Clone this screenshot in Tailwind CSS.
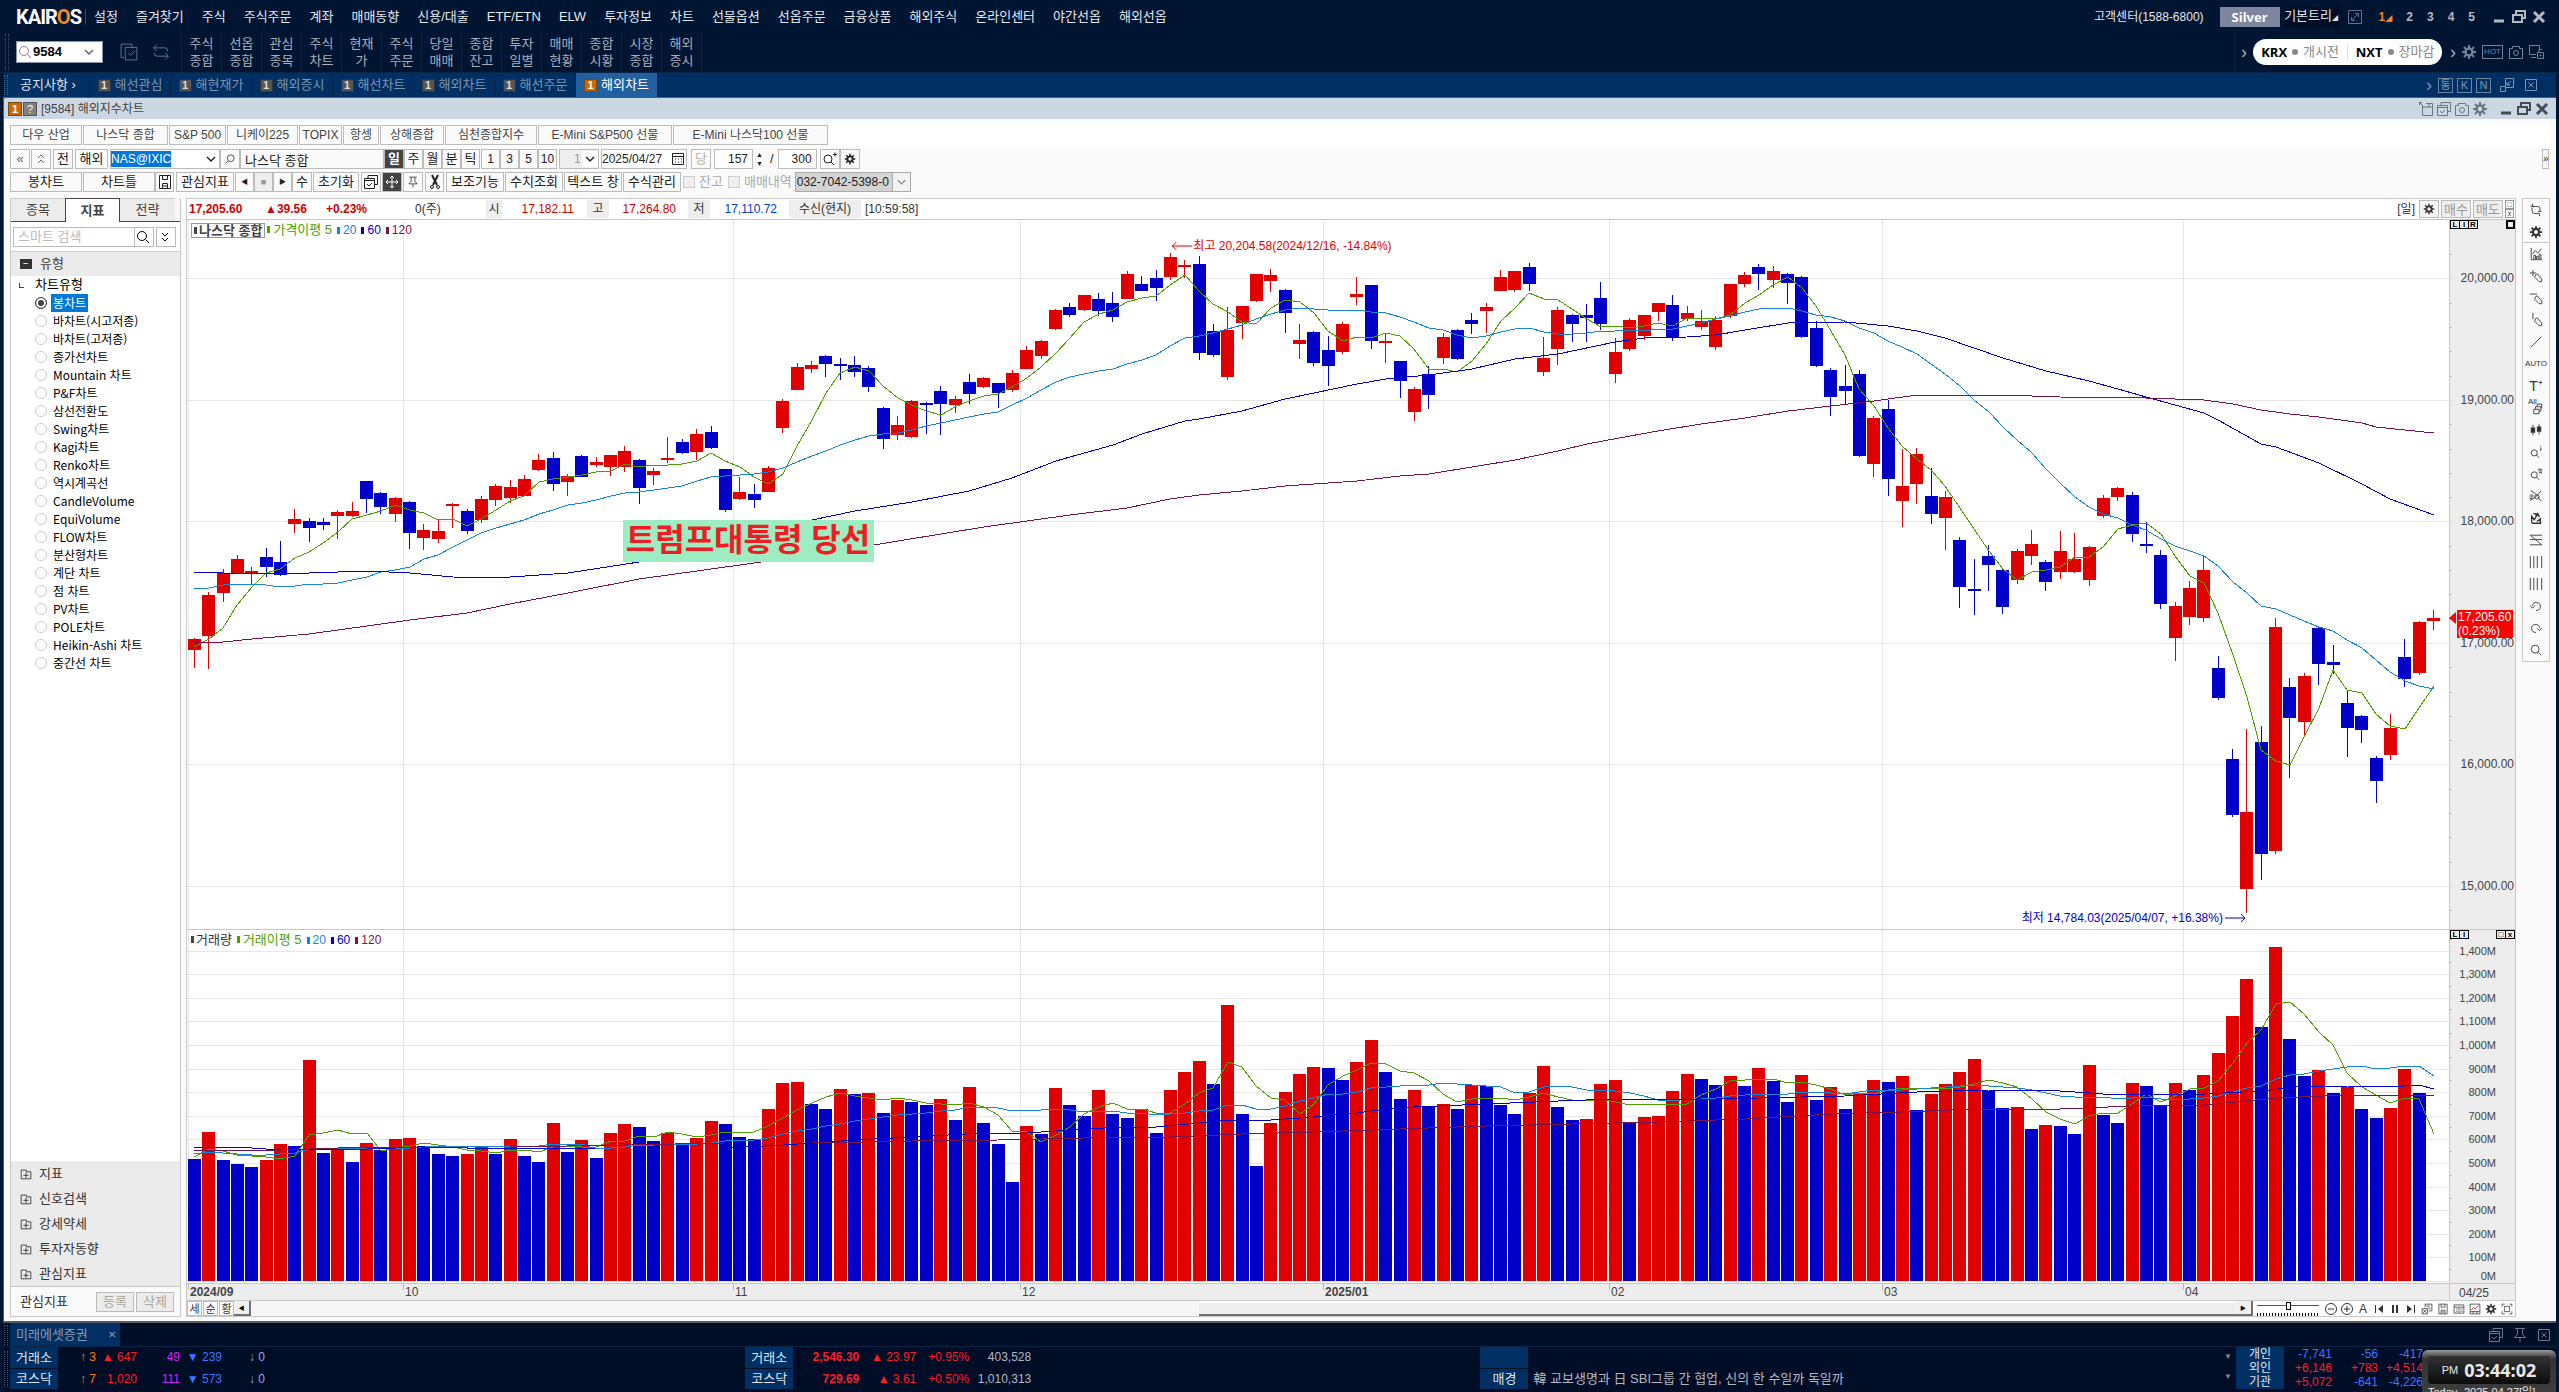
<!DOCTYPE html>
<html lang="ko">
<head>
    <meta charset="utf-8">
    <title>KAIROS - [9584] 해외지수차트</title>
    <meta name="viewport" content="width=device-width, initial-scale=1.0">
    <script src="https://cdn.jsdelivr.net/npm/@tailwindcss/browser@4"></script>
</head>
<body class="bg-[#001532] text-[#333] text-[13px] leading-4 font-['Liberation_Sans','Noto_Sans_CJK_KR',sans-serif] h-screen overflow-hidden flex flex-col whitespace-nowrap">

    <!-- Icon set -->
    <svg class="hidden">
        <defs>
            <symbol id="i-search" viewBox="0 0 16 16"><circle cx="7" cy="7" r="4.500" fill="none" stroke="currentColor"/><path d="M10.500 10.500L14 14" stroke="currentColor"/></symbol>
            <symbol id="i-gear" viewBox="0 0 16 16"><circle cx="8" cy="8" r="3.500" fill="none" stroke="currentColor" stroke-width="2.500"/><path d="M8 1v3M8 12v3M1 8h3M12 8h3M3 3l2 2M11 11l2 2M13 3l-2 2M5 11l-2 2" stroke="currentColor" stroke-width="2"/></symbol>
            <symbol id="i-camera" viewBox="0 0 16 16"><path d="M1.500 4.500h3v-2h7v2h3v10h-13z" fill="none" stroke="currentColor"/><circle cx="8" cy="9" r="2.500" fill="none" stroke="currentColor"/></symbol>
            <symbol id="i-restore" viewBox="0 0 16 16"><path d="M5 5V2h9v7h-3M2 6h9v7H2z" fill="none" stroke="currentColor" stroke-width="2"/></symbol>
            <symbol id="i-close" viewBox="0 0 16 16"><path d="M3 3l10 10M13 3L3 13" stroke="currentColor" stroke-width="3"/></symbol>
            <symbol id="i-min" viewBox="0 0 16 16"><path d="M3 12h10" stroke="currentColor" stroke-width="3"/></symbol>
            <symbol id="i-boxx" viewBox="0 0 16 16"><path d="M2.500 2.500h11v11h-11zM5.500 5.500l5 5M10.500 5.500l-5 5" fill="none" stroke="currentColor"/></symbol>
            <symbol id="i-expand" viewBox="0 0 16 16"><path d="M1.500 1.500h13v13h-13zM5 11l6-6M8 4.500h3.500V8M4.500 8v3.500H8" fill="none" stroke="currentColor"/></symbol>
            <symbol id="i-pop" viewBox="0 0 16 16"><path d="M6.500 1.500h8v9h-8zM1.500 9.500h5v5h-5zM12 4l-4 4M8 5v3h3" fill="none" stroke="currentColor"/></symbol>
            <symbol id="i-copycheck" viewBox="0 0 24 24"><path d="M6 18.500H2.500v-16h13V6" fill="none" stroke="currentColor"/><path d="M7.500 6.500h14v15h-14zM11 13l3 3 5-5" fill="none" stroke="currentColor"/></symbol>
            <symbol id="i-sync" viewBox="0 0 24 24"><path d="M7 3L3 7l4 4M3.500 7H17q3 0 3 4M17 21l4-4-4-4M20.500 17H7q-3 0-3-4" fill="none" stroke="currentColor"/></symbol>
            <symbol id="i-monitors" viewBox="0 0 16 16"><path d="M7 10.500H.500v-9h10V5M2 13.500h5M8.500 8.500h6v6h-6zM10 8V5.500h3M11 11h1v1h-1z" fill="none" stroke="currentColor"/></symbol>
            <symbol id="i-windows" viewBox="0 0 16 16"><path d="M5 4V1.500h9.500v9H12M1.500 4.500h10v10h-10zM1.500 6.500h10M5 1.500h9.500M4 10l2 2 3-3" fill="none" stroke="currentColor"/></symbol>
            <symbol id="i-newwin" viewBox="0 0 16 16"><path d="M4.500 5v9.500h10v-12H8M5 6h9M11 3v3M1 1l4 4M1.500 4V1.500H4" fill="none" stroke="currentColor"/></symbol>
            <symbol id="i-disk" viewBox="0 0 16 16"><path d="M2.500 1.500h11v13h-11zM5.500 1.500v4h5v-4M5.500 14.500v-5h5v5M6 12h4" fill="none" stroke="currentColor"/></symbol>
            <symbol id="i-calendar" viewBox="0 0 16 16"><path d="M2.500 2.500h11v11h-11zM2.500 5.500h11M5 8h1M8 8h1M11 8h1M5 11h1M8 11h1M11 11h1" fill="none" stroke="currentColor"/></symbol>
            <symbol id="i-chart" viewBox="0 0 16 16"><path d="M2.500 1v13.500H15M4 8l3-4 3 3 4-5" fill="none" stroke="currentColor"/><path d="M5.500 14V9.500h2V14M8.500 14v-3h2v3M11.500 14V8.500h2V14" fill="none" stroke="currentColor"/></symbol>
            <symbol id="i-pencil" viewBox="0 0 16 16"><path d="M7.500 6.500l2-1 5 6v3h-3l-5-5z" fill="none" stroke="currentColor"/></symbol>
            <symbol id="i-penplus" viewBox="0 0 16 16"><path d="M1 4.500h7M4.500 1v7" stroke="currentColor"/><use href="#i-pencil"/></symbol>
            <symbol id="i-penh" viewBox="0 0 16 16"><path d="M1 3.500h8" stroke="currentColor"/><use href="#i-pencil"/></symbol>
            <symbol id="i-penv" viewBox="0 0 16 16"><path d="M4.500 0v7" stroke="currentColor"/><use href="#i-pencil"/></symbol>
            <symbol id="i-line" viewBox="0 0 16 16"><path d="M2 14L14 2" stroke="currentColor"/></symbol>
            <symbol id="i-candles" viewBox="0 0 16 16"><path d="M4.500 2v12M11.500 1v12" stroke="currentColor"/><path d="M2 5h5v6H2zM9 4h5v6H9z" fill="currentColor"/></symbol>
            <symbol id="i-searchinfo" viewBox="0 0 16 16"><circle cx="6" cy="9" r="3.500" fill="none" stroke="currentColor"/><path d="M8.500 11.500l3 3M13.500 1v1M13.500 3v4" stroke="currentColor"/></symbol>
            <symbol id="i-searchplus" viewBox="0 0 16 16"><circle cx="6" cy="8" r="4" fill="none" stroke="currentColor"/><path d="M9 11l3 3M11 3.500h4M13 1.500v4" stroke="currentColor"/></symbol>
            <symbol id="i-searchlist" viewBox="0 0 16 16"><circle cx="6" cy="9" r="3.500" fill="none" stroke="currentColor"/><path d="M8.500 11.500l3 3M10 2.500h5M11 4.500h4M11 6.500h4" stroke="currentColor"/></symbol>
            <symbol id="i-cross" viewBox="0 0 16 16"><path d="M1 13q6-2 13-11M2 2q4 2 7 5M10 9l4 5M1 7h4M1 9h4M1 11h3" fill="none" stroke="currentColor"/><circle cx="9" cy="9" r="2.500" fill="none" stroke="currentColor"/></symbol>
            <symbol id="i-export" viewBox="0 0 16 16"><path d="M5.500 6V1.500h9v9H10M7 4h5M9 7h4M1.500 7.500h7v7h-7zM3 9l4 4M7 9l-4 4" fill="none" stroke="currentColor"/></symbol>
            <symbol id="i-swap" viewBox="0 0 16 16"><path d="M3 13V6l3 4 4-7 2 4M3 14h11M5 3h3v3M9 12l4-3v5" fill="none" stroke="currentColor" stroke-width="1.500"/></symbol>
            <symbol id="i-all" viewBox="0 0 16 16"><path d="M5.500 9.500h6v5h-6zM7.500 9V6.500h6v5H12M9.500 6V3.500h5v5" fill="none" stroke="currentColor"/></symbol>
            <symbol id="i-z" viewBox="0 0 16 16"><path d="M1 2.500h14M1 7.500h14M1 13.500h14M2 3l12 10" fill="none" stroke="currentColor"/></symbol>
            <symbol id="i-vbars" viewBox="0 0 16 16"><path d="M1.500 1v14M5.500 1v14M9.500 1v14M14.500 1v14" stroke="currentColor"/></symbol>
            <symbol id="i-undo" viewBox="0 0 16 16"><path d="M4 8a4.500 4.500 0 1 1 4 5M1.500 7.500L4 10.500l3-3" fill="none" stroke="currentColor"/></symbol>
            <symbol id="i-redo" viewBox="0 0 16 16"><path d="M12 8a4.500 4.500 0 1 0-4 5M9 8.500l3 2.500 2.500-3" fill="none" stroke="currentColor"/></symbol>
            <symbol id="i-link" viewBox="0 0 16 16"><path d="M4 1v3h6q2.500 0 2.500 3v2M12 15v-3H6q-2.500 0-2.500-3V5M1.500 3.500h4M10 9.500h4.500" fill="none" stroke="currentColor"/></symbol>
            <symbol id="i-zoomout" viewBox="0 0 16 16"><circle cx="8" cy="8" r="5.500" fill="none" stroke="currentColor"/><path d="M5 8h6" stroke="currentColor"/></symbol>
            <symbol id="i-zoomin" viewBox="0 0 16 16"><circle cx="8" cy="8" r="5.500" fill="none" stroke="currentColor"/><path d="M5 8h6M8 5v6" stroke="currentColor"/></symbol>
            <symbol id="i-first" viewBox="0 0 16 16"><path d="M4.500 4v8" stroke="currentColor"/><path d="M12 4v8L7 8z" fill="currentColor"/></symbol>
            <symbol id="i-last" viewBox="0 0 16 16"><path d="M11.500 4v8" stroke="currentColor"/><path d="M4 4v8l5-4z" fill="currentColor"/></symbol>
            <symbol id="i-pause" viewBox="0 0 16 16"><path d="M6 4v8M10 4v8" stroke="currentColor" stroke-width="2"/></symbol>
            <symbol id="i-table" viewBox="0 0 16 16"><path d="M1.500 2.500h13v11h-13zM1.500 5.500h13M8 6v7M4 8h2M4 11h2M10 8h3M10 11h3" fill="none" stroke="currentColor"/></symbol>
            <symbol id="i-minichart" viewBox="0 0 16 16"><path d="M1.500 1.500h13v13h-13zM1.500 11.500h13M5.500 11v3M10.500 11v3" fill="none" stroke="#333"/><path d="M3 9l3-3 2 2 5-5" fill="none" stroke="#c00"/></symbol>
            <symbol id="i-full" viewBox="0 0 16 16"><path d="M1.500 5V1.500H5M11 1.500h3.500V5M14.500 11v3.500H11M5 14.500H1.500V11M4.500 4.500h7v7h-7z" fill="none" stroke="currentColor"/></symbol>
            <symbol id="i-tree" viewBox="0 0 16 16"><path d="M2.500 3.500h6v2h5v8h-11zM5 9.500h6M8 6.500v6" fill="none" stroke="currentColor"/></symbol>
            <symbol id="i-pin" viewBox="0 0 16 16"><path d="M3 1.500h10M5.500 2v5L2.500 10.500h11L10.500 7V2M8 11v4" fill="none" stroke="currentColor"/></symbol>
            <symbol id="i-arrow" viewBox="0 0 16 16"><path d="M8 2v12M2 8h12M6 4l2-2 2 2M6 12l2 2 2-2M4 6L2 8l2 2M12 6l2 2-2 2" fill="none" stroke="currentColor"/></symbol>
            <symbol id="i-cut" viewBox="0 0 16 16"><path d="M5 1l5 10M11 1L6 11" stroke="currentColor" stroke-width="2"/><circle cx="5" cy="13" r="1.500" fill="none" stroke="currentColor"/><circle cx="11" cy="13" r="1.500" fill="none" stroke="currentColor"/></symbol>
            <symbol id="i-down" viewBox="0 0 16 16"><path d="M4 6l4 4 4-4" fill="none" stroke="currentColor" stroke-width="1.500"/></symbol>
            <symbol id="i-up2" viewBox="0 0 16 16"><path d="M5 7l3-3 3 3M5 12l3-3 3 3" fill="none" stroke="currentColor"/></symbol>
        </defs>
    </svg>

    <!-- Main menu -->
    <header class="h-8 shrink-0 flex items-center pt-[2px] pl-4 pr-3 text-[#e4e8ee]">
        <h1 class="w-[61px] text-xl font-bold font-['Roboto',sans-serif] tracking-tighter text-white">KAIR<span class="text-[#f08a1c]">O</span>S</h1>
        <span class="w-px h-4 bg-[#3a4a66] mx-2"></span>
        <nav class="flex gap-[18px] grow">
            <a href="#">설정</a><a href="#">즐겨찾기</a><a href="#">주식</a><a href="#">주식주문</a><a href="#">계좌</a><a href="#">매매동향</a><a href="#">신용/대출</a><a href="#">ETF/ETN</a><a href="#">ELW</a><a href="#">투자정보</a><a href="#">차트</a><a href="#">선물옵션</a><a href="#">선옵주문</a><a href="#">금융상품</a><a href="#">해외주식</a><a href="#">온라인센터</a><a href="#">야간선옵</a><a href="#">해외선옵</a>
        </nav>
        <span class="text-xs mr-4">고객센터(1588-6800)</span>
        <button class="w-[60px] h-5 bg-[#7d869e] text-white font-bold font-['Noto_Sans',sans-serif]">Silver</button>
        <button class="w-[55px] h-5 ml-1 bg-[#000d24]">기본트리<span class="text-[6px]">◢</span></button>
        <svg class="size-4 ml-2 text-[#66738c]"><use href="#i-expand"/></svg>
        <div class="flex gap-[14px] ml-4 font-bold text-xs text-[#b4bac6]">
            <button class="text-[#f08a1c]">1<span class="text-[7px]">◢</span></button><button>2</button><button>3</button><button>4</button><button>5</button>
        </div>
        <div class="flex gap-1 ml-4 text-[#b4b8c0]">
            <button aria-label="최소화"><svg class="size-4"><use href="#i-min"/></svg></button>
            <button aria-label="이전 크기"><svg class="size-4"><use href="#i-restore"/></svg></button>
            <button aria-label="닫기"><svg class="size-4"><use href="#i-close"/></svg></button>
        </div>
    </header>

    <!-- Quick menu -->
    <div class="h-[41px] shrink-0 flex items-center pl-[5px] pr-[14px] border-b border-[#0b2547] text-[#a9afbc]">
        <span class="w-1 h-9 border-x border-dotted border-[#46546e]"></span>
        <label class="ml-[7px] w-[87px] h-[22px] bg-white flex items-center text-black border border-[#8a94a6]">
            <svg class="size-4 text-[#888]"><use href="#i-search"/></svg>
            <input class="w-11 font-bold text-[13px] outline-none" value="9584" aria-label="화면번호">
            <svg class="size-4 ml-1 text-[#666]"><use href="#i-down"/></svg>
        </label>
        <button class="ml-4" aria-label="화면복사"><svg class="size-5 text-[#76829a]"><use href="#i-copycheck"/></svg></button>
        <button class="ml-3" aria-label="연동"><svg class="size-5 text-[#76829a]"><use href="#i-sync"/></svg></button>
        <div id="quick" class="flex ml-[10px] border-l border-[#0b2547]"></div>
        <div class="ml-auto flex items-center h-full border-l border-[#0b2547] pl-[6px]">
            <span class="w-2 text-lg leading-4">›</span>
            <div class="flex w-[189px] h-[26px] ml-1 rounded-full bg-white text-[#888] items-center text-[13px]">
                <span class="flex-1 flex items-center justify-center gap-[5px] border-r border-[#ddd]"><b class="text-black font-['Open_Sans',sans-serif]">KRX</b><i class="size-[6px] rounded-full bg-[#888]"></i>개시전</span>
                <span class="flex-1 flex items-center justify-center gap-[5px]"><b class="text-black font-['Open_Sans',sans-serif]">NXT</b><i class="size-[6px] rounded-full bg-[#888]"></i>장마감</span>
            </div>
            <span class="w-2 text-lg leading-4 ml-2">›</span>
            <div class="flex items-center gap-[5px] ml-[3px] text-[#76829a]">
                <svg class="size-4"><use href="#i-gear"/></svg>
                <span class="border border-[#76829a] text-[8px] leading-3 px-px">HOT</span>
                <svg class="size-4"><use href="#i-camera"/></svg>
                <svg class="size-4"><use href="#i-monitors"/></svg>
            </div>
        </div>
    </div>

    <!-- Screen tabs -->
    <div class="h-6 shrink-0 flex items-center bg-[#003063] ml-1 mr-[3px] text-[#7f93ad]">
        <span class="w-1 h-5 border-x border-dotted border-[#46648a]"></span>
        <button class="w-[82px] h-full pl-3 text-left text-[#dfe5ee] border-r border-[#0a2448]">공지사항 ›</button>
        <div id="tabs" class="flex h-full grow"></div>
        <div class="flex items-center gap-1 pr-[17px] text-[11px]">
            <span class="w-2 text-lg leading-4">›</span>
            <button class="w-[15px] h-[15px] leading-[13px] border border-[#6e84a3]">통</button>
            <button class="w-[15px] h-[15px] leading-[13px] border border-[#6e84a3]">K</button>
            <button class="w-[15px] h-[15px] leading-[13px] border border-[#6e84a3]">N</button>
            <svg class="size-4 ml-1"><use href="#i-pop"/></svg>
            <svg class="size-4 ml-1"><use href="#i-boxx"/></svg>
        </div>
    </div>

    <!-- Chart window -->
    <main class="grow min-h-0 flex flex-col ml-[3px] mr-[3px] bg-[#fafafa] border-l border-t border-b-2 border-[#555b63]">
        <div class="h-[21px] shrink-0 bg-[#cbd7e3] flex items-center pl-1 pr-[6px]">
            <span class="w-[14px] h-[14px] bg-[#c86a00] border border-[#7c4a10] text-white font-bold text-[11px] leading-3 text-center">1</span>
            <span class="w-[14px] h-[14px] ml-px bg-[#808080] border border-[#555] text-white text-[11px] leading-3 text-center">?</span>
            <h2 class="ml-1 grow text-[#444] text-xs">[9584] 해외지수차트</h2>
            <div class="flex gap-[2px] text-[#6a7683]">
                <svg class="size-4"><use href="#i-newwin"/></svg>
                <svg class="size-4"><use href="#i-windows"/></svg>
                <svg class="size-4"><use href="#i-camera"/></svg>
                <svg class="size-4"><use href="#i-gear"/></svg>
                <svg class="size-4 ml-2 text-[#444c55]"><use href="#i-min"/></svg>
                <svg class="size-4 text-[#444c55]"><use href="#i-restore"/></svg>
                <svg class="size-4 text-[#444c55]"><use href="#i-close"/></svg>
            </div>
        </div>

        <!-- Index buttons -->
        <div id="indices" class="mt-1 h-6 shrink-0 bg-white mr-[7px] flex items-center gap-px pl-[6px] text-[#444]"></div>

        <!-- Toolbar 1 -->
        <div class="mt-[2px] h-5 shrink-0 flex items-center pl-[6px] pr-[7px] text-[#222] [&>button]:h-5 [&>button]:border [&>button]:border-[#bbb] [&>button]:text-center">
            <button class="w-5 text-[#666]">«</button>
            <button class="w-5 ml-px text-[#666]"><svg class="size-4 mx-auto"><use href="#i-up2"/></svg></button>
            <button class="w-5 ml-[2px]">전</button>
            <button class="w-[33px] ml-[2px]">해외</button>
            <div class="w-[110px] h-5 ml-[2px] flex items-center border border-[#bbb] bg-white">
                <input class="w-[60px] bg-[#0078d7] text-white text-xs outline-none" value="NAS@IXIC" aria-label="종목코드">
                <svg class="size-4 ml-auto"><use href="#i-down"/></svg>
            </div>
            <button class="w-5"><svg class="size-3 mx-auto -scale-x-100"><use href="#i-search"/></svg></button>
            <input class="w-[144px] h-5 border border-[#bbb] pl-1 leading-4 outline-none" value="나스닥 종합" aria-label="종목명">
            <button class="w-5 bg-[#444] text-white font-bold">일</button>
            <button class="w-[19px]">주</button>
            <button class="w-[19px]">월</button>
            <button class="w-[19px]">분</button>
            <button class="w-[19px]">틱</button>
            <button class="w-[19px] ml-px text-xs">1</button>
            <button class="w-[19px] text-xs">3</button>
            <button class="w-[19px] text-xs">5</button>
            <button class="w-[19px] text-xs">10</button>
            <div class="relative w-10 h-5 ml-[2px] border border-[#bbb] bg-white flex items-center">
                <select class="w-full h-full appearance-none bg-[#eee] pl-[14px] text-xs text-[#999]" aria-label="주기"><option>1</option></select>
                <svg class="size-4 absolute right-0 bg-white"><use href="#i-down"/></svg>
            </div>
            <label class="w-[86px] h-5 ml-[2px] flex items-center border border-[#bbb] bg-white">
                <input class="w-16 text-xs outline-none" value="2025/04/27" aria-label="기준일">
                <svg class="size-4 ml-auto"><use href="#i-calendar"/></svg>
            </label>
            <button class="w-5 ml-1 text-[#b8b4a0]">당</button>
            <input class="w-[39px] h-5 ml-[3px] border border-[#bbb] bg-white text-right pr-1 text-xs" value="157" aria-label="표시봉수">
            <span class="w-[13px] flex flex-col text-center text-[7px] leading-[9px]"><span>▲</span><span>▼</span></span>
            <span class="mx-1">/</span>
            <input class="w-[39px] h-5 border border-[#bbb] bg-white text-right pr-1 text-xs" value="300" aria-label="전체봉수">
            <button class="w-5 ml-[3px]"><svg class="size-4 mx-auto"><use href="#i-searchplus"/></svg></button>
            <button class="w-5"><svg class="size-3 mx-auto"><use href="#i-gear"/></svg></button>
            <button class="w-[7px] ml-auto text-[10px]">»</button>
        </div>

        <!-- Toolbar 2 -->
        <div class="mt-[3px] h-5 shrink-0 flex items-center pl-[6px] text-[#222] [&>button]:h-5 [&>button]:border [&>button]:border-[#bbb] [&>button]:text-center">
            <button class="w-[72px]">봉차트</button>
            <button class="w-[72px] ml-px">차트틀</button>
            <button class="w-[19px]"><svg class="size-4 mx-auto"><use href="#i-disk"/></svg></button>
            <button class="w-[58px] ml-[2px]">관심지표</button>
            <button class="w-[19px] ml-px text-[7px]">◀</button>
            <button class="w-[19px] bg-[#eee] text-[#999] text-[9px]">■</button>
            <button class="w-[19px] text-[7px]">▶</button>
            <button class="w-5">수</button>
            <button class="w-[46px] ml-px">초기화</button>
            <button class="w-5 ml-[2px]"><svg class="size-4 mx-auto"><use href="#i-windows"/></svg></button>
            <button class="w-5 ml-px bg-[#444] text-white"><svg class="size-4 mx-auto"><use href="#i-arrow"/></svg></button>
            <button class="w-5 ml-px"><svg class="size-3 mx-auto"><use href="#i-pin"/></svg></button>
            <button class="w-[19px] ml-[2px]"><svg class="size-4 mx-auto"><use href="#i-cut"/></svg></button>
            <button class="w-[58px] ml-[2px]">보조기능</button>
            <button class="w-[58px] ml-px">수치조회</button>
            <button class="w-[58px] ml-px">텍스트 창</button>
            <button class="w-[58px] ml-px">수식관리</button>
            <label class="flex items-center gap-1 ml-[2px] text-[#aaa]"><input type="checkbox" disabled class="appearance-none size-3 border border-[#ccc] bg-[#eee]">잔고</label>
            <label class="flex items-center gap-1 ml-[5px] text-[#aaa]"><input type="checkbox" disabled class="appearance-none size-3 border border-[#ccc] bg-[#eee]">매매내역</label>
            <div class="relative flex items-center w-[116px] h-5 ml-[3px] border border-[#aaa] bg-[#d4d4d4]">
                <select class="w-full h-full appearance-none text-xs pl-px" aria-label="계좌번호"><option>032-7042-5398-0</option></select>
                <svg class="w-[18px] h-[18px] p-px absolute right-0 bg-[#f2f2f2] border-l border-[#aaa] text-[#888]"><use href="#i-down"/></svg>
            </div>
        </div>

        <div class="grow min-h-0 flex mt-[6px] mb-1 pl-[6px] pr-[6px]">
            <!-- Indicator panel -->
            <aside class="w-[171px] shrink-0 flex flex-col border border-t-0 border-[#c8c8c8] text-black">
                <div class="flex h-6 shrink-0 text-[#444]">
                    <button class="w-[54px] h-6 bg-[#ececec] border-t border-[#ccc] border-b border-b-[#444]">종목</button>
                    <button class="w-[55px] h-6 bg-white border border-b-0 border-[#444] font-bold">지표</button>
                    <button class="w-[55px] h-6 bg-[#ececec] border-t border-[#ccc] border-b border-b-[#444]">전략</button>
                    <span class="grow border-b border-[#444]"></span>
                </div>
                <div class="flex h-[29px] shrink-0 items-center px-[2px] bg-white">
                    <input class="w-[122px] h-5 border border-[#bbb] pl-1 leading-4 placeholder:text-[#bbb] outline-none" placeholder="스마트 검색" aria-label="스마트 검색">
                    <button class="w-5 h-5 -ml-px border border-[#bbb]"><svg class="size-4"><use href="#i-search"/></svg></button>
                    <button class="w-5 h-5 ml-[2px] border border-[#bbb]"><svg class="size-4 rotate-180"><use href="#i-up2"/></svg></button>
                </div>
                <div class="h-[25px] shrink-0 flex items-center gap-2 pl-[9px] bg-[#ebebeb] border-t border-[#ccc] text-[#444]">
                    <span class="w-[12px] h-[10px] bg-[#333] text-white text-[10px] leading-[9px] text-center">−</span>유형
                </div>
                <div class="grow min-h-0 bg-white overflow-hidden">
                    <div class="h-[18px] flex items-center pl-2 gap-[11px]"><span class="size-[5px] border-l border-b border-[#444]"></span>차트유형</div>
                    <div id="tree"></div>
                </div>
                <div id="groups" class="bg-[#ebebeb] text-[#333]"></div>
                <div class="h-[30px] shrink-0 flex items-center border-t border-[#c8c8c8] pl-[9px] text-[#333]">
                    <span class="w-[76px]">관심지표</span>
                    <button disabled class="w-[38px] h-5 bg-[#ececec] border border-[#bbb] text-[#aaa696]">등록</button>
                    <button disabled class="w-[38px] h-5 ml-[2px] bg-[#ececec] border border-[#bbb] text-[#aaa696]">삭제</button>
                </div>
            </aside>

            <!-- Chart -->
            <section class="grow min-w-0 ml-[5px] border border-[#c8c8c8] flex flex-col bg-white">
                <div class="h-[21px] shrink-0 flex items-center border-b border-[#c8c8c8] text-xs pr-px">
                    <b class="text-[#d00000] w-[78px] pl-[2px]">17,205.60</b>
                    <b class="text-[#d00000] w-[61px]">▲39.56</b>
                    <b class="text-[#d00000] w-[89px]">+0.23%</b>
                    <span class="w-[71px]">0(주)</span>
                    <span class="w-4 h-[18px] leading-[18px] text-center bg-[#eee]">시</span><span class="w-[85px] pr-[13px] text-right text-[#d00000]">17,182.11</span>
                    <span class="w-[22px] h-[18px] leading-[18px] text-center bg-[#eee]">고</span><span class="w-[79px] pr-[12px] text-right text-[#d00000]">17,264.80</span>
                    <span class="w-[22px] h-[18px] leading-[18px] text-center bg-[#eee]">저</span><span class="w-[79px] pr-[12px] text-right text-[#0040c8]">17,110.72</span>
                    <span class="w-[72px] h-[18px] leading-[18px] text-center bg-[#eee]">수신(현지)</span>
                    <span class="ml-1">[10:59:58]</span>
                    <span class="ml-auto mr-1">[일]</span>
                    <button class="w-5 h-[18px] border border-[#bbb] bg-[#f4f4f4]"><svg class="size-3 mx-auto"><use href="#i-gear"/></svg></button>
                    <button disabled class="w-[30px] h-[18px] ml-[2px] border border-[#bbb] bg-[#eee] text-[#999] text-[13px]">매수</button>
                    <button disabled class="w-[30px] h-[18px] ml-[2px] border border-[#bbb] bg-[#eee] text-[#999] text-[13px]">매도</button>
                    <span class="w-[9px] ml-[2px] flex flex-col text-[7px] leading-[7px] text-center"><span class="border border-[#999]">□</span><span class="border border-[#999]">x</span></span>
                </div>
                <div class="relative grow basis-[709px] min-h-0 border-b border-[#c8c8c8]">
                    <svg id="price" class="absolute inset-0 size-full text-xs"></svg>
                    <div class="absolute left-1 top-0 flex items-center text-xs h-5">
                        <b class="border border-[#999] px-[2px] h-[15px] leading-[13px] text-[13px] text-[#444] flex items-center gap-[2px]"><i class="w-[3px] h-[7px] bg-[#444]"></i>나스닥 종합</b>
                        <span class="flex items-center gap-[3px] ml-[2px] text-[#4ea000]"><i class="w-[3px] h-[7px] bg-[#4ea000]"></i><span class="text-[13px]">가격이평 5</span></span>
                        <span class="flex items-center gap-[3px] ml-[5px] text-[#1584d8]"><i class="w-[3px] h-[7px] bg-[#1584d8]"></i>20</span>
                        <span class="flex items-center gap-[3px] ml-[5px] text-[#0000c8]"><i class="w-[3px] h-[7px] bg-[#0000c8]"></i>60</span>
                        <span class="flex items-center gap-[3px] ml-[5px] text-[#78144c]"><i class="w-[3px] h-[7px] bg-[#78144c]"></i>120</span>
                    </div>
                    <div class="absolute right-0 top-0 w-[65px] flex text-[8px] leading-[7px] font-bold text-black">
                        <span class="border border-black w-[10px] text-center">L</span><span class="border border-l-0 border-black w-[9px] text-center">I</span><span class="border border-l-0 border-black w-[9px] text-center">R</span>
                        <span class="border-2 border-black size-[9px] ml-auto"></span>
                    </div>
                </div>
                <div class="relative grow basis-[353px] min-h-0 border-b border-[#c8c8c8]">
                    <svg id="volume" class="absolute inset-0 size-full text-xs"></svg>
                    <div class="absolute left-1 top-0 flex items-center text-xs h-5">
                        <span class="flex items-center gap-[2px] text-[13px]"><i class="w-[3px] h-[7px] bg-[#444]"></i>거래량</span>
                        <span class="flex items-center gap-[3px] ml-[5px] text-[#4ea000]"><i class="w-[3px] h-[7px] bg-[#4ea000]"></i><span class="text-[13px]">거래이평 5</span></span>
                        <span class="flex items-center gap-[3px] ml-[5px] text-[#1584d8]"><i class="w-[3px] h-[7px] bg-[#1584d8]"></i>20</span>
                        <span class="flex items-center gap-[3px] ml-[5px] text-[#0000c8]"><i class="w-[3px] h-[7px] bg-[#0000c8]"></i>60</span>
                        <span class="flex items-center gap-[3px] ml-[5px] text-[#78144c]"><i class="w-[3px] h-[7px] bg-[#78144c]"></i>120</span>
                    </div>
                    <div class="absolute right-0 top-0 w-[65px] flex text-[8px] leading-[7px] font-bold text-black">
                        <span class="border border-black w-[10px] text-center">L</span><span class="border border-l-0 border-black w-[9px] text-center">I</span>
                        <span class="border border-black w-[10px] text-center ml-auto">□</span><span class="border border-l-0 border-black w-[9px] text-center">x</span>
                    </div>
                </div>
                <div class="relative h-[17px] shrink-0 bg-[#ededed] border-b border-[#c8c8c8]">
                    <svg id="months" class="absolute inset-0 size-full text-xs"></svg>
                </div>
                <!-- Scroll bar -->
                <div class="h-[15px] shrink-0 flex items-center text-[11px] leading-3">
                    <button class="w-[15px] h-[15px] border border-[#bbb]">세</button>
                    <button class="w-[15px] h-[15px] border border-[#bbb] ml-px">순</button>
                    <button class="w-[15px] h-[15px] border border-[#bbb] ml-px">황</button>
                    <button class="w-[17px] h-[15px] bg-[#f0f0f0] border-r-2 border-b-2 border-[#707070] text-[6px] text-black">◀</button>
                    <div class="grow basis-[947px] h-full bg-[#f6f6f6]"></div>
                    <div class="grow basis-[1036px] h-[14px] bg-[#eee] border-b-2 border-[#707070] border-t border-t-white"></div>
                    <button class="w-[18px] h-[15px] bg-[#f0f0f0] border-r-2 border-b-2 border-[#707070] text-[6px] text-black">▶</button>
                    <div class="w-[62px] ml-1 h-[14px] flex flex-col justify-between">
                        <input type="range" aria-label="확대" class="appearance-none block w-full h-[8px] bg-[linear-gradient(#555,#555)] bg-[length:100%_1px] bg-no-repeat bg-[position:0_3px] [&::-webkit-slider-thumb]:appearance-none [&::-webkit-slider-thumb]:w-[5px] [&::-webkit-slider-thumb]:h-[8px] [&::-webkit-slider-thumb]:border [&::-webkit-slider-thumb]:border-black [&::-webkit-slider-thumb]:bg-white">
                        <span class="h-[3px] bg-[repeating-linear-gradient(90deg,#000_0,#000_1px,transparent_1px,transparent_3px)]"></span>
                    </div>
                    <div class="flex ml-1 text-[#333]">
                        <svg class="size-4"><use href="#i-zoomout"/></svg>
                        <svg class="size-4"><use href="#i-zoomin"/></svg>
                        <span class="w-4 text-center text-xs leading-4">A</span>
                        <svg class="size-4"><use href="#i-first"/></svg>
                        <svg class="size-4"><use href="#i-pause"/></svg>
                        <svg class="size-4"><use href="#i-last"/></svg>
                        <svg class="size-4 p-[2px]"><use href="#i-export"/></svg>
                        <svg class="size-4 p-[2px]"><use href="#i-disk"/></svg>
                        <svg class="size-4 p-[2px]"><use href="#i-table"/></svg>
                        <svg class="size-4 p-[2px]"><use href="#i-minichart"/></svg>
                        <svg class="size-4 p-[2px]"><use href="#i-gear"/></svg>
                        <svg class="size-4 p-[2px]"><use href="#i-full"/></svg>
                    </div>
                </div>
            </section>

            <!-- Drawing tools -->
            <div id="tools" class="w-7 shrink-0 ml-[6px] self-start flex flex-col items-center border border-[#c8c8c8] bg-[#fafafa] text-[#333]"></div>
        </div>
    </main>

    <!-- Docked ticker -->
    <footer class="relative h-[69px] shrink-0 bg-[#000d26] ml-1 mr-[3px] flex flex-col text-[#a4abb8] overflow-hidden">
        <div class="h-6 shrink-0 flex items-center border-b border-[#0b2547]">
            <span class="w-1 h-5 border-x border-dotted border-[#46546e]"></span>
            <div class="w-[110px] h-full ml-[2px] pl-[6px] pr-1 flex items-center justify-between bg-[#003063] text-[#8b9bb2]">미래에셋증권 <button class="text-[10px]">✕</button></div>
            <div class="flex gap-2 ml-auto mr-1 text-[#6f7888]">
                <svg class="size-4"><use href="#i-windows"/></svg>
                <svg class="size-4"><use href="#i-pin"/></svg>
                <svg class="size-4"><use href="#i-boxx"/></svg>
            </div>
        </div>
        <div class="flex grow">
            <span class="w-1 h-9 mt-1 border-x border-dotted border-[#46546e]"></span>
            <table class="ml-[2px] text-xs self-start">
                <tr class="h-[21px] border-b border-[#000d26]"><th class="w-12 bg-[#003063] text-[#dfe5ee] text-[13px] font-normal">거래소</th><td class="w-[38px] text-right text-[#ff7a10]">↑ 3</td><td class="w-[41px] text-right text-[#ff1a28]">▲ 647</td><td class="w-[43px] text-right text-[#e020f0]">49</td><td class="w-[42px] text-right text-[#3a78ff]">▼ 239</td><td class="w-[43px] text-right text-[#9aa4ff]">↓ 0</td></tr>
                <tr class="h-[21px]"><th class="bg-[#003063] text-[#dfe5ee] text-[13px] font-normal">코스닥</th><td class="text-right text-[#ff7a10]">↑ 7</td><td class="text-right text-[#ff1a28]">1,020</td><td class="text-right text-[#e020f0]">111</td><td class="text-right text-[#3a78ff]">▼ 573</td><td class="text-right text-[#9aa4ff]">↓ 0</td></tr>
            </table>
            <div class="grow basis-[479px]"></div>
            <table class="text-xs self-start text-[#ff1a28]">
                <tr class="h-[21px] border-b border-[#000d26]"><th class="w-12 bg-[#003063] text-[#dfe5ee] text-[13px] font-normal">거래소</th><td class="w-[66px] text-right font-bold">2,546.30</td><td class="w-[57px] text-right">▲ 23.97</td><td class="w-[53px] text-right">+0.95%</td><td class="w-[62px] text-right text-[#b4b8c0]">403,528</td></tr>
                <tr class="h-[21px]"><th class="bg-[#003063] text-[#dfe5ee] text-[13px] font-normal">코스닥</th><td class="text-right font-bold">729.69</td><td class="text-right">▲ 3.61</td><td class="text-right">+0.50%</td><td class="text-right text-[#b4b8c0]">1,010,313</td></tr>
            </table>
            <div class="grow basis-[448px]"></div>
            <table class="self-start text-[#b4b8c0]">
                <tr class="h-[21px] border-b border-[#000d26]"><th class="w-12 bg-[#003063]"></th><td></td></tr>
                <tr class="h-[21px]"><th class="bg-[#003063] text-[#dfe5ee] font-normal">매경</th><td class="pl-[5px]">韓 교보생명과 日 SBI그룹 간 협업, 신의 한 수일까 독일까</td></tr>
            </table>
            <div class="grow basis-[375px]"></div>
            <div class="w-4 flex flex-col text-[8px] text-[#808898]"><button class="h-5">▼</button><button class="h-5">▼</button></div>
            <table class="self-start text-xs leading-[14px] mr-[133px]">
                <tr class="h-[14px] text-[#3a78ff]"><th class="w-12 bg-[#003063] text-[#dfe5ee] font-normal">개인</th><td class="w-12 text-right">-7,741</td><td class="w-[46px] text-right">-56</td><td class="w-[45px] text-right">-417</td></tr>
                <tr class="h-[14px] text-[#ff1a28]"><th class="bg-[#003063] text-[#dfe5ee] font-normal">외인</th><td class="text-right">+6,146</td><td class="text-right">+783</td><td class="text-right">+4,514</td></tr>
                <tr class="h-[14px] text-[#3a78ff]"><th class="bg-[#003063] text-[#dfe5ee] font-normal">기관</th><td class="text-right text-[#ff1a28]">+5,072</td><td class="text-right">-641</td><td class="text-right">-4,226</td></tr>
            </table>
        </div>
        <!-- Clock -->
        <div class="absolute right-0 top-[27px] w-[134px] h-[60px] rounded-t-md bg-linear-to-b from-[#999] via-[#333] via-15% to-[#444] px-[6px] pt-[6px] text-[#e8e8e8]">
            <div class="h-7 bg-linear-to-b from-[#333] to-[#0c0c0c] flex items-center justify-center gap-[6px] rounded-b-sm"><span class="text-[11px]">PM</span><b class="text-lg leading-none font-['Open_Sans',sans-serif]">03:44:02</b></div>
            <div class="flex text-[11px] leading-4"><span class="w-9">Today</span>2025.04.27[일]</div>
        </div>
    </footer>

<script>
const el = id => document.getElementById(id);

el('quick').innerHTML = ['주식 종합', '선옵 종합', '관심 종목', '주식 차트', '현재 가', '주식 주문', '당일 매매', '종합 잔고', '투자 일별', '매매 현황', '종합 시황', '시장 종합', '해외 증시']
    .map(t => `<button class="w-10 h-10 px-1 border-r border-[#0b2547] whitespace-normal leading-[17px]">${t}</button>`).join('');

el('tabs').innerHTML = ['해선관심', '해현재가', '해외증시', '해선차트', '해외차트', '해선주문', '해외차트'].map((t, i) => i < 6
    ? `<button class="w-[81px] flex items-center justify-center gap-1 border-r border-[#0a2448]"><span class="w-[13px] h-[13px] bg-[#555] border border-[#333] text-[11px] leading-[11px] font-bold text-[#ddd]">1</span>${t}</button>`
    : `<button class="w-[81px] flex items-center justify-center gap-1 bg-[#2360a0] text-white"><span class="w-[13px] h-[13px] bg-[#c86a00] border border-[#7c4a10] text-[11px] leading-[11px] font-bold">1</span>${t}</button>`).join('');

el('indices').innerHTML = [['다우 산업', 72], ['나스닥 종합', 85], ['S&amp;P 500', 57], ['니케이225', 71], ['TOPIX', 43], ['항셍', 36], ['상해종합', 64], ['심천종합지수', 92], ['E-Mini S&amp;P500 선물', 134], ['E-Mini 나스닥100 선물', 155]]
    .map(([t, w]) => `<button class="h-5 border border-[#bbb] bg-[#fafafa] text-center text-xs" style="width:${w}px">${t}</button>`).join('');

el('tree').innerHTML = ['봉차트', '바차트(시고저종)', '바차트(고저종)', '종가선차트', 'Mountain 차트', 'P&amp;F차트', '삼선전환도', 'Swing차트', 'Kagi차트', 'Renko차트', '역시계곡선', 'CandleVolume', 'EquiVolume', 'FLOW차트', '분산형차트', '계단 차트', '점 차트', 'PV차트', 'POLE차트', 'Heikin-Ashi 차트', '중간선 차트']
    .map((t, i) => `<label class="group h-[18px] flex items-center pl-6 gap-1"><input type="radio" name="type" ${i ? '' : 'checked'} class="appearance-none size-3 rounded-full border border-[#ccc] checked:border-[#444] checked:bg-[#444] checked:shadow-[inset_0_0_0_2px_#fff]"><span class="px-[2px] leading-[18px] text-xs font-['Noto_Sans_CJK_KR',sans-serif] group-has-checked:bg-[#0078d7] group-has-checked:text-white">${t}</span></label>`).join('');

el('groups').innerHTML = ['지표', '신호검색', '강세약세', '투자자동향', '관심지표']
    .map(t => `<button class="h-[25px] flex items-center gap-[6px] pl-2"><svg class="size-[14px]"><use href="#i-tree"/></svg>${t}</button>`).join('');

el('tools').innerHTML = ['link', 'gear', 'chart', 'penplus', 'penh', 'penv', 'line', 'AUTO', 'T⁺', 'all', 'candles', 'searchinfo', 'searchlist', 'cross', 'swap', 'z', 'vbars', 'vbars', 'undo', 'redo', 'search']
    .map((t, i) => /^[a-z]/.test(t)
        ? `<button class="relative w-full h-[22px] flex items-center justify-center ${i == 1 ? 'border-b border-[#c8c8c8]' : ''}" aria-label="${t}">${t == 'all' ? '<span class="absolute left-[5px] top-0 text-[8px] leading-[9px]">All</span>' : ''}<svg class="size-[14px]"><use href="#i-${t}"/></svg></button>`
        : `<button class="h-[22px] ${t == 'T⁺' ? 'text-sm' : 'text-[8px]'}">${t}</button>`).join('');

// high, body top, body bottom, low in chart units; r = rising, b = falling
const candles = `r418,419,430,448 r372,375,416,449 r349,353,373,382 r335,339,354,354 r347,351,354,364 b328,337,347,357 b321,342,355,356 r289,299,304,313 b298,301,308,322 b298,302,305,310
r290,292,296,319 r282,291,296,297 b261,261,279,293 b272,273,287,294 r277,278,294,302 b281,282,313,329 r304,310,318,330 r300,311,319,323 r283,284,286,308 b289,291,311,314
r276,279,300,303 r264,266,280,286 r260,267,278,283 r255,259,276,276 r234,240,250,251 b232,238,264,271 r254,256,262,276 b235,236,257,257 r237,242,245,247 r235,235,247,256
r226,231,247,252 b239,240,268,284 r248,251,255,265 r217,238,240,243 b219,222,233,234 r209,214,232,240 b206,212,228,229 b249,249,290,292 r257,272,279,280 b264,274,280,288
r246,248,272,272 r179,181,208,213 r143,147,170,170 r141,145,149,153 b135,136,144,157 b138,144,146,160 b136,145,152,157 b146,148,167,172 b187,188,219,229 r196,205,215,220
r180,181,217,218 b182,183,185,214 b166,171,184,215 r176,179,185,193 b154,162,174,184 r157,158,167,168 b163,163,173,188 r150,153,170,172 r126,130,149,149 r120,121,136,139
r89,90,109,110 b83,87,95,97 r75,75,90,91 b73,79,91,96 b72,83,97,102 r51,54,79,79 b56,64,71,71 b50,58,68,81 r33,37,57,60 r40,45,47,58
b36,44,133,140 b104,111,135,137 r87,110,157,160 r86,86,103,119 r54,54,81,82 r49,55,61,72 b69,70,93,113 r104,120,124,139 b111,112,143,146 b116,130,146,166
r102,104,132,134 r57,74,77,85 b65,65,121,129 r113,121,123,143 b141,141,161,178 r167,169,192,201 b146,154,175,189 r113,117,138,144 b109,110,139,140 b93,100,104,114
r83,87,91,113 r50,57,71,71 r51,51,70,72 b43,47,64,71 r117,138,152,156 r87,90,129,145 b94,95,104,122 b84,95,98,122 b62,78,104,110 r118,132,154,163
r98,100,129,131 r95,95,116,120 r83,83,92,101 b75,85,118,121 r86,93,99,101 r90,101,107,110 r96,100,127,130 r64,64,96,98 r52,55,64,67 b44,47,54,70
r46,51,60,68 b53,54,63,84 b56,57,117,118 b101,108,146,147 b148,150,177,196 b145,166,171,185 b150,154,236,237 r196,198,244,257 b180,189,259,276 r229,266,281,307
r228,234,264,284 b248,276,294,304 r271,277,298,330 b317,320,367,388 b339,369,371,395 b325,336,345,371 b349,350,387,394 r329,331,360,364 r310,324,336,345 b340,342,362,371
r311,331,352,359 r313,339,352,353 r326,327,360,366 r275,278,296,298 r267,268,277,281 b272,275,314,322 b302,324,326,333 b330,335,384,389 r382,386,418,441 r361,368,397,405
r335,350,398,402 b436,448,478,480 b529,539,595,597 r509,592,669,693 b506,522,634,660 r398,407,631,634 b458,467,498,558 r453,456,502,516 b407,408,444,465 b425,442,445,454
b471,483,508,537 b495,496,510,523 b536,538,561,583 r494,508,535,540 b419,437,459,467 r401,402,453,455 r390,398,401,410`
    .split(/\s+/).map(s => [s[0], ...s.slice(1).split(',').map(Number)]);

const volumes = [122,149,121,117,114,121,137,135,221,128,133,119,138,131,142,143,135,127,125,127,134,127,142,125,119,158,129,141,123,148,157,154,140,148,137,143,160,157,144,142,
    172,198,199,177,172,192,187,188,168,181,179,176,182,161,194,158,137,99,155,147,193,176,165,191,167,163,172,148,191,209,220,197,276,167,115,158,189,207,214,213,
    201,219,241,209,182,191,175,177,172,196,195,176,167,188,215,174,161,162,197,201,159,164,165,190,207,202,196,205,195,213,200,179,206,181,194,172,187,201,199,205,
    171,187,197,209,222,190,173,174,152,156,155,147,216,166,158,198,195,176,198,191,206,228,265,302,254,334,242,205,211,188,194,172,163,173,212,188,0];

const closes = candles.map(c => c[0] == 'r' ? c[2] : c[3]);
const average = (data, n, head) => data.map((_, i) => i < head.length ? [i, head[i]] : [i, data.slice(i - n + 1, i + 1).reduce((a, b) => a + b) / n]);
const pairs = s => s.split(' ').map(p => p.split(':').map(Number));

const priceLines = [
    ['#4ea000', average(closes, 5, [427, 419, 408, 385])],
    ['#1584d8', average(closes, 20, [368, 368, 365, 364, 364, 365, 367, 366, 364, 364, 363, 360, 357, 352, 350, 347, 339, 335, 327])],
    ['#0000c8', pairs('0:352 2:353 6:354 12:351 15:353 18:357 21:358 26:353 31:342 37:321 43:300 46:291 50:282 54:271 57:258 60:241 61:237 64:225 66:214 69:201 70:199 73:191 76:179 78:173 81:164 83:159 86:155 89:149 92:139 95:134 99:122 101:118 104:117 106:115 108:110 111:103 115:102 118:106 120:111 122:118 124:128 126:138 129:151 132:161 134:169 136:177 140:193 141:200 144:224 145:227 148:243 151:264 153:279 156:295')],
    ['#78144c', pairs('0:423 2:422 4:419 8:414 12:406 15:400 19:393 22:384 26:373 31:359 35:351 39:343 44:333 49:321 55:307 58:301 61:295 65:288 68:279 70:275 73:271 76:266 78:264 81:261 84:256 86:254 89:247 92:240 95:231 97:224 100:216 102:211 105:204 108:198 111:191 114:186 117:181 120:175 126:175 130:177 136:178 140:180 142:184 144:190 146:194 148:197 151:203 152:207 154:210 156:213')]
];
const volumeLines = [
    ['#4ea000', average(volumes, 5, [124, 132, 130, 126])],
    ['#1584d8', average(volumes, 20, [127, 129, 128, 127, 126, 126, 127, 128, 132, 133, 133, 133, 133, 133, 133, 133, 134, 135, 135])],
    ['#0000c8', pairs('0:134 3:134 5:132 12:132 16:134 22:132 28:133 37:133 41:136 46:141 50:144 55:148 58:148 62:152 65:154 67:154 70:158 72:161 75:161 78:164 81:168 82:170 85:174 90:177 95:180 99:182 103:181 109:183 115:185 120:189 125:191 129:191 133:187 140:187 144:190 147:195 150:195 153:194 155:196 156:192')],
    ['#78144c', pairs('0:131 6:131 10:133 16:134 22:134 30:136 37:138 43:138 50:140 56:141 62:143 68:144 73:147 78:149 82:151 90:155 96:157 102:159 108:162 114:167 119:169 124:172 130:172 135:175 140:176 145:183 150:186 156:186')]
];
const months = [[1, '2024/09'], [216, '10'], [546, '11'], [833, '12'], [1136, '2025/01'], [1422, '02'], [1695, '03'], [1996, '04']];

const AXIS = 66;

function draw() {
    const W = el('price').clientWidth, plot = W - AXIS, kx = plot / 2262;
    if (plot <= 0) return;
    const x = i => (7.3 + i * 14.354) * kx, bw = 13 * kx;
    const rect = (x, y, w, h, c) => `<rect x="${Math.round(x)}" y="${Math.round(y)}" width="${Math.max(1, Math.round(w))}" height="${Math.round(h)}" fill="${c}"/>`;
    const text = (x, y, t, c, more = '') => `<text x="${x}" y="${y}" fill="${c}" ${more}>${t}</text>`;
    const line = (pts, c) => `<polyline points="${pts.map(p => p.map(Math.round)).join(' ')}" fill="none" stroke="${c}" shape-rendering="crispEdges"/>`;
    const grid = H => months.map(m => rect(m[0] * kx, 0, 1, H, '#e6e6e6')).join('');
    const red = '#e00000', blue = '#0000c8';

    // price
    let H = el('price').clientHeight, ky = H / 709, y = v => v * ky;
    let s = grid(H) + rect(plot, 0, AXIS, H, '#ededed') + rect(plot, 0, 1, H, '#c8c8c8');
    for (let k = -1; k < 27; k++) s += rect(plot, y(58.4 + k * 24.3), 3, 1, '#bbb');
    for (let k = 0; k < 6; k++) {
        const gy = y(58.4 + k * 121.5);
        s += rect(0, gy, plot + 5, 1, '#e6e6e6') + text(W - 1, gy + 4, (20 - k) + ',000.00', '#444', 'text-anchor="end"');
    }
    candles.forEach(([k, h, t, b, l], i) => {
        const c = k == 'r' ? red : blue;
        s += rect(x(i) - .5, y(h), 1, y(l - h), c) + rect(x(i) - bw / 2, y(t), bw, y(b - t), c);
    });
    priceLines.forEach(([c, p]) => s += line(p.map(([i, v]) => [x(i), y(v)]), c));
    s += `<path d="M${x(68) + 22} ${y(26)}h-20m4 -4l-4 4l4 4" stroke="${red}" fill="none"/>` + text(x(68) + 23, y(26) + 4, '최고 20,204.58(2024/12/16, -14.84%)', red);
    s += `<path d="M${x(143) - 22} ${y(698)}h20m-4 -4l4 4l-4 4" stroke="${blue}" fill="none"/>` + text(x(143) - 24, y(698) + 4, '최저 14,784.03(2025/04/07, +16.38%)', blue, 'text-anchor="end"');
    s += rect(436 * kx, y(300), 251, 42, '#9eecc2') + text(436 * kx + 125, y(300) + 31, '트럼프대통령 당선', '#f01c24', 'text-anchor="middle" font-size="32" font-weight="bold"');
    s += `<path d="M${plot} ${y(398)}l7 -6v12z" fill="#f00"/>` + rect(plot + 8, y(390), 56, 28, '#f00') + text(plot + 9, y(390) + 11, '17,205.60', '#fff') + text(plot + 9, y(390) + 25, '(0.23%)', '#fff');
    el('price').innerHTML = s;

    // volume
    H = el('volume').clientHeight; ky = H / 353; y = v => (351 - v) * ky;
    s = grid(H) + rect(plot, 0, AXIS, H, '#ededed') + rect(plot, 0, 1, H, '#c8c8c8');
    for (let k = 0; k < 15; k++) {
        const gy = y(k * 23.6);
        s += rect(0, gy, plot + 5, 1, '#e6e6e6') + rect(plot, gy - 12, 3, 1, '#bbb')
            + text(W - 19, gy + (k ? 4 : -1), (k * 100).toLocaleString('en') + 'M', '#444', 'text-anchor="end" font-size="11"');
    }
    volumes.forEach((v, i) => s += rect(x(i) - bw / 2, y(v), bw, v * ky, i && v > volumes[i - 1] ? red : blue));
    volumeLines.forEach(([c, p]) => s += line(p.map(([i, v]) => [x(i), y(v)]), c));
    el('volume').innerHTML = s;

    // months
    el('months').innerHTML = months.map(([m, t]) => rect(m * kx, 0, 1, 6, '#bbb') + text(m * kx + 2, 12, t, '#444', t.length > 2 ? 'font-weight="bold"' : '')).join('')
        + rect(plot, 0, 1, 17, '#c8c8c8') + text(plot + 10, 13, '04/25', '#444');
}
const watcher = new ResizeObserver(draw);
watcher.observe(el('price').parentElement);
watcher.observe(el('volume').parentElement);
</script>
</body>
</html>
